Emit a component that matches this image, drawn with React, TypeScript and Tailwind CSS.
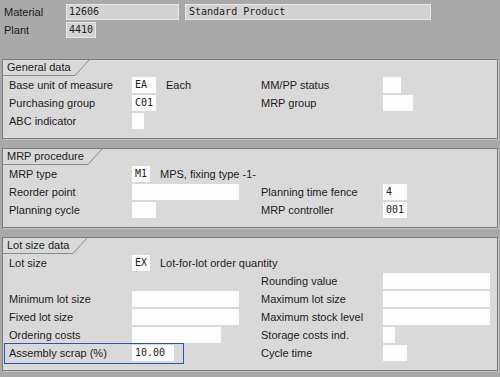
import React from "react";

type Cell = {
  label?: string;
  value?: string;
  w?: number;
  text?: string;
  focus?: boolean;
};

type Row = { left?: Cell; right?: Cell };

const GENERAL: Row[] = [
  {
    left: { label: "Base unit of measure", value: "EA", w: 24, text: "Each" },
    right: { label: "MM/PP status", value: "", w: 18 },
  },
  {
    left: { label: "Purchasing group", value: "C01", w: 24 },
    right: { label: "MRP group", value: "", w: 30 },
  },
  { left: { label: "ABC indicator", value: "", w: 12 } },
];

const MRP: Row[] = [
  { left: { label: "MRP type", value: "M1", w: 18, text: "MPS, fixing type -1-" } },
  {
    left: { label: "Reorder point", value: "", w: 107 },
    right: { label: "Planning time fence", value: "4", w: 24 },
  },
  {
    left: { label: "Planning cycle", value: "", w: 24 },
    right: { label: "MRP controller", value: "001", w: 24 },
  },
];

const LOT: Row[] = [
  { left: { label: "Lot size", value: "EX", w: 18, text: "Lot-for-lot order quantity" } },
  { right: { label: "Rounding value", value: "", w: 107 } },
  {
    left: { label: "Minimum lot size", value: "", w: 107 },
    right: { label: "Maximum lot size", value: "", w: 107 },
  },
  {
    left: { label: "Fixed lot size", value: "", w: 107 },
    right: { label: "Maximum stock level", value: "", w: 107 },
  },
  {
    left: { label: "Ordering costs", value: "", w: 89 },
    right: { label: "Storage costs ind.", value: "", w: 12 },
  },
  {
    left: { label: "Assembly scrap (%)", value: "10.00", w: 42, focus: true },
    right: { label: "Cycle time", value: "", w: 24 },
  },
];

function Input({ w, value }: { w: number; value: string }) {
  return (
    <div
      className="h-4 shrink-0 bg-[#fdfdfd] pl-[3px] font-['DejaVu_Sans_Mono',monospace] text-[10px] leading-4 text-[#222]"
      style={{ width: w }}
    >
      {value}
    </div>
  );
}

function FieldCell({ cell, labelW }: { cell?: Cell; labelW: number }) {
  if (!cell) return null;
  return (
    <div className="relative flex h-4 items-center">
      {cell.focus && (
        <span className="pointer-events-none absolute -left-[5px] -top-[2px] h-[21px] w-[180px] border border-[#2458b0]" />
      )}
      <span className="shrink-0 truncate text-[#1b1b1b]" style={{ width: labelW }}>
        {cell.label}
      </span>
      {cell.w !== undefined && <Input w={cell.w} value={cell.value ?? ""} />}
      {cell.text && (
        <span className="ml-[10px] whitespace-nowrap text-[#1b1b1b]">{cell.text}</span>
      )}
    </div>
  );
}

function Panel({ title, rows }: { title: string; rows: Row[] }) {
  return (
    <section className="mx-[2px] border border-[#7b7b7b] bg-[#d9d9d9] pb-[7px] shadow-[1px_1px_0_#c4c4c4]">
      {/* tab */}
      <div className="flex h-4">
        <div className="flex h-4 items-center border-b border-[#8a8a8a] pl-[4px] pr-[4px] text-[#1b1b1b]">
          {title}
        </div>
        <svg width="14" height="16" viewBox="0 0 14 16" className="shrink-0">
          <line x1="0" y1="15.5" x2="14" y2="0" stroke="#8a8a8a" strokeWidth="1" />
        </svg>
      </div>
      <div className="pl-[6px] pt-[1px]">
        {rows.map((r, i) => (
          <div key={i} className="flex h-[18px] items-start">
            <div className="w-[252px] shrink-0">
              <FieldCell cell={r.left} labelW={123} />
            </div>
            <div className="flex-1">
              <FieldCell cell={r.right} labelW={122} />
            </div>
          </div>
        ))}
      </div>
    </section>
  );
}

export default function App() {
  return (
    <div className="h-[377px] w-[500px] overflow-hidden bg-[#a9a9a9] font-['Liberation_Sans',Arial,sans-serif] text-[11px]">
      {/* header fields */}
      <div className="flex flex-col gap-[2px] pl-[4px] pt-[4px]">
        <div className="flex h-4 items-center">
          <span className="w-[62px] text-[#1b1b1b]">Material</span>
          <div className="h-4 w-[113px] border border-[#e8e8e8] bg-[#d3d3d3] pl-[2px] font-['DejaVu_Sans_Mono',monospace] text-[10px] leading-[14px] text-[#222]">
            12606
          </div>
          <div className="ml-[6px] h-4 w-[246px] border border-[#e8e8e8] bg-[#d3d3d3] pl-[3px] font-['DejaVu_Sans_Mono',monospace] text-[10px] leading-[14px] text-[#222]">
            Standard Product
          </div>
        </div>
        <div className="flex h-4 items-center">
          <span className="w-[62px] text-[#1b1b1b]">Plant</span>
          <div className="h-4 w-[30px] border border-[#e8e8e8] bg-[#d3d3d3] pl-[2px] font-['DejaVu_Sans_Mono',monospace] text-[10px] leading-[14px] text-[#222]">
            4410
          </div>
        </div>
      </div>

      <div className="mt-[21px] flex flex-col gap-[9px]">
        <Panel title="General data" rows={GENERAL} />
        <Panel title="MRP procedure" rows={MRP} />
        <Panel title="Lot size data" rows={LOT} />
      </div>
    </div>
  );
}
